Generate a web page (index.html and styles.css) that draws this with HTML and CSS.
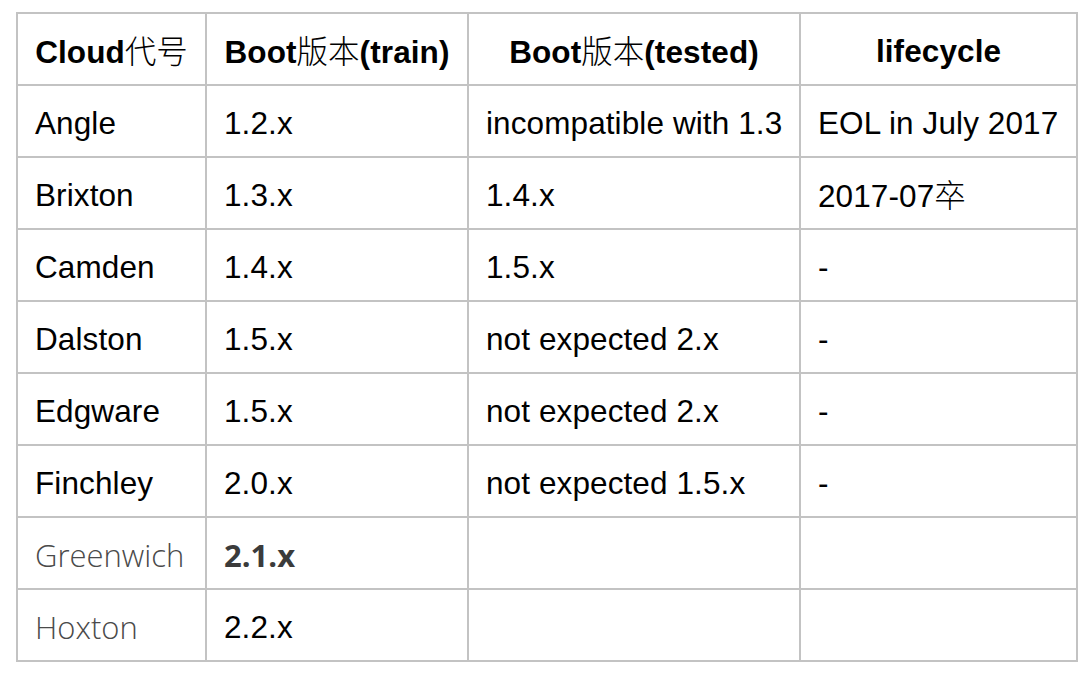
FILE: index.html
```html
<!DOCTYPE html>
<html lang="zh">
<head>
<meta charset="utf-8">
<title>Spring Cloud versions</title>
<link rel="stylesheet" href="styles.css">
</head>
<body>
<table class="versions">
  <colgroup>
    <col class="c1"><col class="c2"><col class="c3"><col class="c4">
  </colgroup>
  <thead>
    <tr>
      <th>Cloud<span class="cjk">代号</span></th>
      <th>Boot<span class="cjk">版本</span>(train)</th>
      <th>Boot<span class="cjk">版本</span>(tested)</th>
      <th>lifecycle</th>
    </tr>
  </thead>
  <tbody>
    <tr><td>Angle</td><td>1.2.x</td><td>incompatible with 1.3</td><td>EOL in July 2017</td></tr>
    <tr><td>Brixton</td><td>1.3.x</td><td>1.4.x</td><td>2017-07<span class="cjk">卒</span></td></tr>
    <tr><td>Camden</td><td>1.4.x</td><td>1.5.x</td><td>-</td></tr>
    <tr><td>Dalston</td><td>1.5.x</td><td>not expected 2.x</td><td>-</td></tr>
    <tr><td>Edgware</td><td>1.5.x</td><td>not expected 2.x</td><td>-</td></tr>
    <tr><td>Finchley</td><td>2.0.x</td><td>not expected 1.5.x</td><td>-</td></tr>
    <tr><td class="light">Greenwich</td><td class="strong">2.1.x</td><td></td><td></td></tr>
    <tr><td class="light">Hoxton</td><td>2.2.x</td><td></td><td></td></tr>
  </tbody>
</table>
</body>
</html>
```
FILE: styles.css
```css
html, body {
  margin: 0;
  padding: 0;
  background: #ffffff;
}
body {
  padding: 12px 0 0 16px;
  font-family: "Liberation Sans", Arial, "Noto Sans CJK SC", sans-serif;
  color: #000;
}
.versions {
  border-collapse: separate;
  border-spacing: 0;
  table-layout: fixed;
  width: 1062px;
  border-top: 2px solid #c3c3c3;
  border-left: 2px solid #c3c3c3;
}
.c1 { width: 189px; }
.c2 { width: 262px; }
.c3 { width: 332px; }
.c4 { width: 277px; }
.versions th,
.versions td {
  height: 70px;
  box-sizing: border-box;
  padding: 3px 0 0 17px;
  border-right: 2px solid #c3c3c3;
  border-bottom: 2px solid #c3c3c3;
  font-size: 31.5px;
  letter-spacing: 0.1px;
  line-height: 36px;
  vertical-align: middle;
  white-space: nowrap;
  text-align: left;
}
.versions th {
  font-weight: 700;
  text-align: center;
  padding: 3px 0 0 0;
}
.versions tr {
  height: 72px;
}
.cjk {
  font-family: "Noto Sans CJK SC", sans-serif;
  font-weight: 300;
  letter-spacing: 0;
}
.versions td.light {
  font-family: "Open Sans", sans-serif;
  font-weight: 300;
  letter-spacing: 0;
  font-size: 31px;
  color: #4a4a4a;
}
.versions td.strong {
  font-family: "Open Sans", sans-serif;
  font-weight: 700;
  letter-spacing: 0;
  font-size: 31px;
  color: #3b3b3b;
}
```
